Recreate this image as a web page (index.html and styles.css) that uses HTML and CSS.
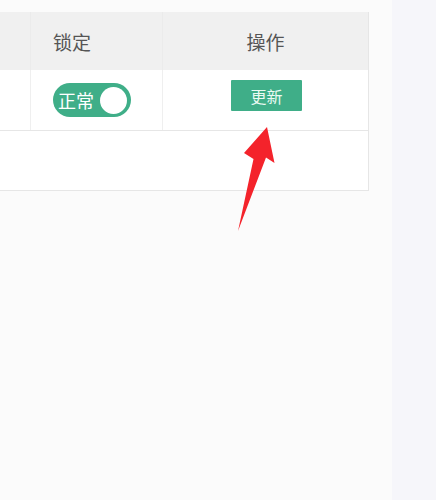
FILE: index.html
```html
<!DOCTYPE html>
<html lang="zh">
<head>
<meta charset="utf-8">
<link rel="stylesheet" href="styles.css">
</head>
<body>
<div class="page">
  <div class="main">
    <div class="table">
      <div class="row head">
        <div class="cell c1"></div>
        <div class="cell c2">锁定</div>
        <div class="cell c3 center">操作</div>
      </div>
      <div class="row body">
        <div class="cell c1"></div>
        <div class="cell c2">
          <span class="switch"><span class="switch-text">正常</span><span class="knob"></span></span>
        </div>
        <div class="cell c3 center top">
          <span class="btn">更新</span>
        </div>
      </div>
      <div class="row empty"></div>
    </div>
    <svg class="arrow" width="50" height="120" viewBox="228 120 50 120">
      <path d="M267,127 L274.5,163 L266,157.5 L238,231 L253.5,159 L244,153 Z" fill="#f4232b"/>
    </svg>
  </div>
  <div class="side"></div>
</div>
</body>
</html>
```

FILE: styles.css
```css
html, body {
  margin: 0;
  padding: 0;
}
body {
  font-family: "Noto Sans CJK SC", "Noto Sans", sans-serif;
  background: #fbfbfb;
}
.page {
  display: flex;
  height: 500px;
}
.main {
  position: relative;
  width: 392px;
  padding-top: 12px;
  background: #fbfbfb;
}
.side {
  flex: 1;
  background: #f6f6fa;
}
.table {
  width: 368px;
  background: #fff;
  border-right: 1px solid #e6e6e6;
  border-bottom: 1px solid #e6e6e6;
}
.row {
  display: grid;
  grid-template-columns: 31px 132px 205px;
}
.head {
  height: 58px;
  background: #f0f0f0;
}
.body {
  height: 60px;
  border-bottom: 1px solid #e6e6e6;
}
.empty {
  height: 59px;
}
.cell {
  display: flex;
  align-items: center;
  box-sizing: border-box;
}
.c1, .c2 {
  border-right: 1px solid #efefef;
}
.head .c1, .head .c2 {
  border-right-color: #ebebeb;
}
.c2 {
  padding-left: 22px;
}
.head .cell {
  font-size: 19px;
  color: #555;
}
.center {
  justify-content: center;
}
.top {
  align-items: flex-start;
  padding-top: 10px;
  padding-left: 2px;
}
.switch {
  display: flex;
  align-items: center;
  width: 78px;
  height: 34px;
  box-sizing: border-box;
  padding: 0 4px 0 5px;
  border-radius: 17px;
  background: #3fae88;
  justify-content: space-between;
}
.switch-text {
  color: #fff;
  font-size: 18px;
  line-height: 1;
}
.knob {
  width: 27px;
  height: 27px;
  border-radius: 50%;
  background: #fff;
}
.btn {
  display: flex;
  align-items: center;
  justify-content: center;
  width: 71px;
  height: 31px;
  background: #3fae88;
  color: #eafaf3;
  font-size: 16px;
  border-radius: 1px;
}
.arrow {
  position: absolute;
  left: 228px;
  top: 120px;
}
```
